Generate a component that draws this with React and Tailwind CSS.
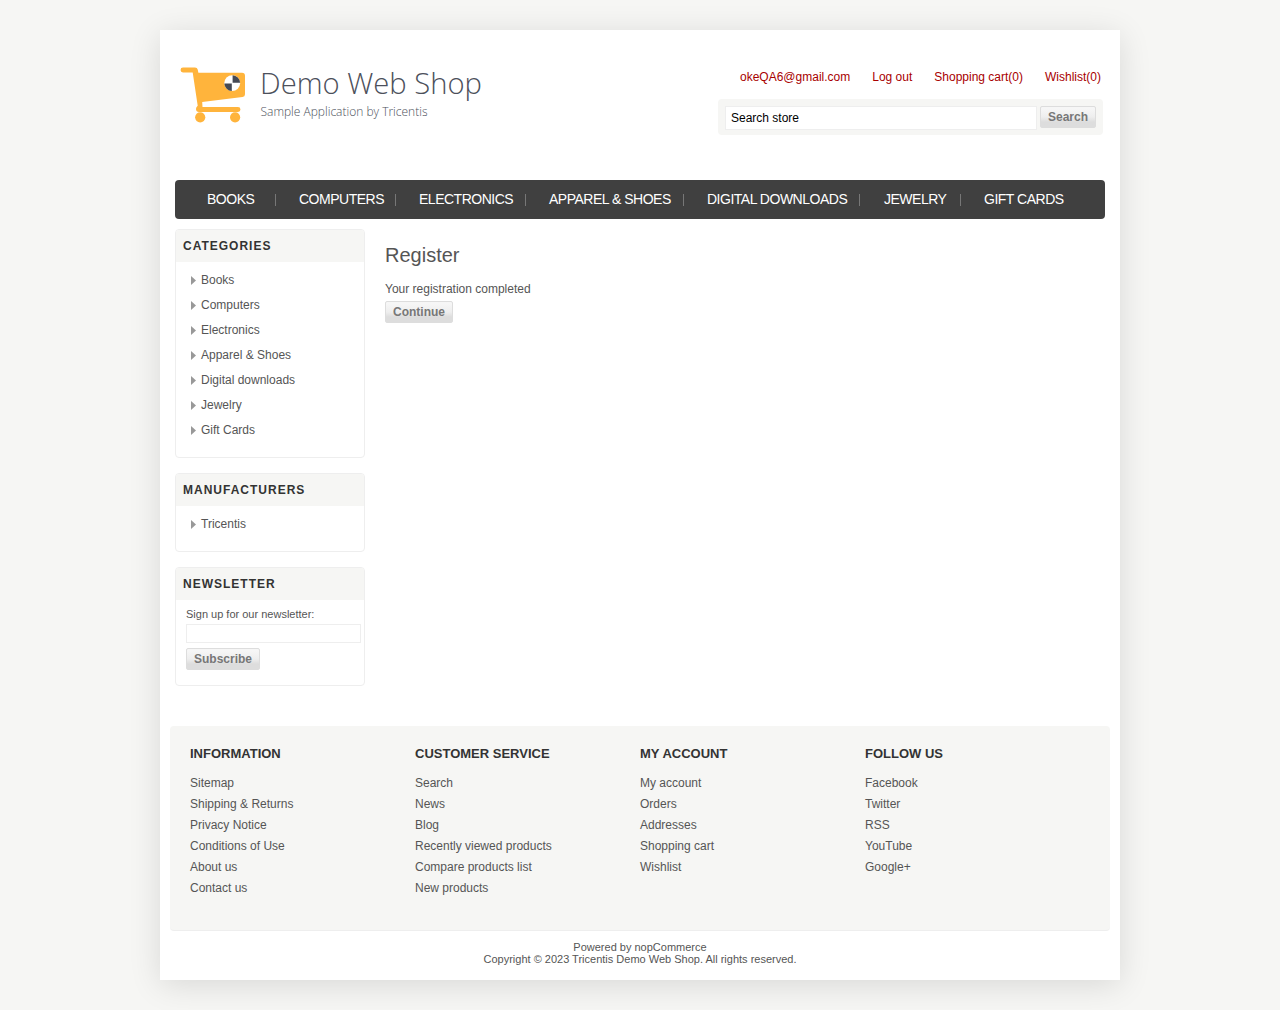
import React from 'react';

const navItems = [
  { label: 'BOOKS', size: 'w-[92px] pl-[23px]' },
  { label: 'COMPUTERS', size: 'w-[120px] pl-[23px]' },
  { label: 'ELECTRONICS', size: 'w-[130px] pl-[23px]' },
  { label: 'APPAREL & SHOES', size: 'w-[158px] pl-[23px]' },
  { label: 'DIGITAL DOWNLOADS', size: 'w-[176px] pl-[23px]' },
  { label: 'JEWELRY', size: 'w-[101px] pl-[24px]' },
  { label: 'GIFT CARDS', size: 'pl-[23px]' },
];

const footerColumns = [
  { title: 'INFORMATION', links: ['Sitemap', 'Shipping & Returns', 'Privacy Notice', 'Conditions of Use', 'About us', 'Contact us'] },
  { title: 'CUSTOMER SERVICE', links: ['Search', 'News', 'Blog', 'Recently viewed products', 'Compare products list', 'New products'] },
  { title: 'MY ACCOUNT', links: ['My account', 'Orders', 'Addresses', 'Shopping cart', 'Wishlist'] },
  { title: 'FOLLOW US', links: ['Facebook', 'Twitter', 'RSS', 'YouTube', 'Google+'] },
];

function Logo() {
  return (
    <svg width="310" height="70" viewBox="0 0 310 70" className="block overflow-visible" role="img" aria-label="Demo Web Shop">
      <g fill="#ffb43c">
        <path d="M8 7.500h12q2.200 0 2.700 2l.7 3.300H67q3 0 3 3v18.400q0 2.400-2.500 2.800L27.200 42.100l.3 4.900H63a2.400 2.400 0 0 1 0 4.900H24q-3 0-3-3 0-2 1.700-3.200L17.700 12.400H8a2.450 2.450 0 0 1 0-4.900z" />
        <circle cx="25.200" cy="57.300" r="5.100" />
        <circle cx="60.100" cy="57.300" r="5.100" />
      </g>
      <circle cx="57.200" cy="23.200" r="7.900" fill="#fff" />
      <path d="M57.600 22.800v-7.500a7.900 7.900 0 0 1 7.500 7.500zM56.800 23.600v7.500a7.900 7.900 0 0 1-7.500-7.500z" fill="#454954" />
      <text x="85" y="33.700" fontSize="29.5" textLength="222" lengthAdjust="spacingAndGlyphs" fill="#4c505b" className="font-['Open_Sans',sans-serif] font-light">Demo Web Shop</text>
      <text x="85.500" y="56" fontSize="12" textLength="167" lengthAdjust="spacingAndGlyphs" fill="#4c505b" className="font-['Open_Sans',sans-serif] font-light">Sample Application by Tricentis</text>
    </svg>
  );
}

function Button({ children, className }) {
  return (
    <button className={`block h-[22px] rounded-[2px] border border-[#dddddd] bg-linear-to-b from-[#f6f6f6] from-10% via-[#eeeeee] via-50% to-[#dddddd] to-75% text-center text-[12px] leading-[20px] font-bold text-[#777777] ${className}`}>
      {children}
    </button>
  );
}

function Block({ title, children, className }) {
  return (
    <section className={`rounded-[4px] border border-[#eeeeee] ${className}`}>
      <h2 className="h-[32px] rounded-t-[3px] bg-[#f6f6f4] pl-[7px] text-[12px] leading-[32px] font-bold tracking-[1px] text-[#333333]">{title}</h2>
      {children}
    </section>
  );
}

function LinkList({ items }) {
  return (
    <ul className="pt-[5px] pl-[15px]">
      {items.map((item) => (
        <li key={item} className="flex h-[25px] items-center">
          <svg width="5" height="9" viewBox="0 0 5 9" className="mt-px mr-[5px]">
            <path d="M0 0L5 4.500 0 9z" fill="#999" />
          </svg>
          <a>{item}</a>
        </li>
      ))}
    </ul>
  );
}

export default function App() {
  return (
    <div className="min-h-[1010px] bg-[#f6f6f4] pt-[30px] font-['Liberation_Sans',Arial,sans-serif] text-[12px] leading-[14px] text-[#555555]">
      <div className="mx-auto h-[950px] w-[960px] bg-white px-[10px] shadow-[0_5px_30px_rgba(0,0,0,0.12)]">
        <header className="flex h-[150px] justify-between px-[5px]">
          <div className="pt-[30px]"><Logo /></div>
          <div className="w-[387px] pt-[40px]">
            <div className="flex h-[14px] justify-end gap-[22px] pr-[4px] whitespace-nowrap text-[#a80000]">
              <a>okeQA6@gmail.com</a>
              <a>Log out</a>
              <a>Shopping cart(0)</a>
              <a>Wishlist(0)</a>
            </div>
            <div className="mt-[15px] flex h-[36px] w-[385px] gap-[3px] rounded-[4px] bg-[#f6f6f4] px-[7px] pt-[7px]">
              <input defaultValue="Search store" className="h-[24px] w-[312px] border border-[#eeeeee] bg-white px-[5px] text-[12px] text-black" />
              <Button className="w-[56px]">Search</Button>
            </div>
          </div>
        </header>

        <nav className="mx-[5px] flex h-[39px] items-center rounded-[4px] bg-[#404040] pl-[9px] text-[14px] leading-[10px] tracking-[-0.49px] whitespace-nowrap text-white">
          {navItems.map((item, i) => (
            <a key={item.label} className={`block h-[12px] ${item.size} ${i < 6 ? 'border-r border-[#777777]' : ''}`}>{item.label}</a>
          ))}
        </nav>

        <div className="mt-[10px] flex h-[497px] px-[5px]">
          <aside className="flex w-[190px] flex-col gap-[15px]">
            <Block title="CATEGORIES" className="h-[229px]">
              <LinkList items={['Books', 'Computers', 'Electronics', 'Apparel & Shoes', 'Digital downloads', 'Jewelry', 'Gift Cards']} />
            </Block>
            <Block title="MANUFACTURERS" className="h-[79px]">
              <LinkList items={['Tricentis']} />
            </Block>
            <Block title="NEWSLETTER" className="h-[119px]">
              <div className="pt-[8px] pl-[10px]">
                <div className="text-[11px] leading-[13px]">Sign up for our newsletter:</div>
                <input aria-label="Newsletter email" className="mt-[3px] block h-[19px] w-[175px] border border-[#eeeeee]" />
                <Button className="mt-[5px] w-[74px]">Subscribe</Button>
              </div>
            </Block>
          </aside>
          <main className="pt-[14px] pl-[20px]">
            <h1 className="text-[20px] leading-[24px]">Register</h1>
            <p className="mt-[15px]">Your registration completed</p>
            <Button className="mt-[5px] w-[68px]">Continue</Button>
          </main>
        </div>

        <footer>
          <div className="flex h-[205px] rounded-[4px] border-b border-[#eeeeee] bg-[#f6f6f4] pl-[20px]">
            {footerColumns.map((col) => (
              <div key={col.title} className="w-[225px] pt-[20px]">
                <h3 className="text-[13px] leading-[15px] font-bold text-[#333333]">{col.title}</h3>
                <ul className="mt-[12px]">
                  {col.links.map((link) => (
                    <li key={link} className="h-[21px] leading-[21px]"><a>{link}</a></li>
                  ))}
                </ul>
              </div>
            ))}
          </div>
          <div className="pt-[10px] text-center text-[11px] leading-[12px]">
            <div>Powered by <a>nopCommerce</a></div>
            <div>Copyright © 2023 Tricentis Demo Web Shop. All rights reserved.</div>
          </div>
        </footer>
      </div>
    </div>
  );
}
